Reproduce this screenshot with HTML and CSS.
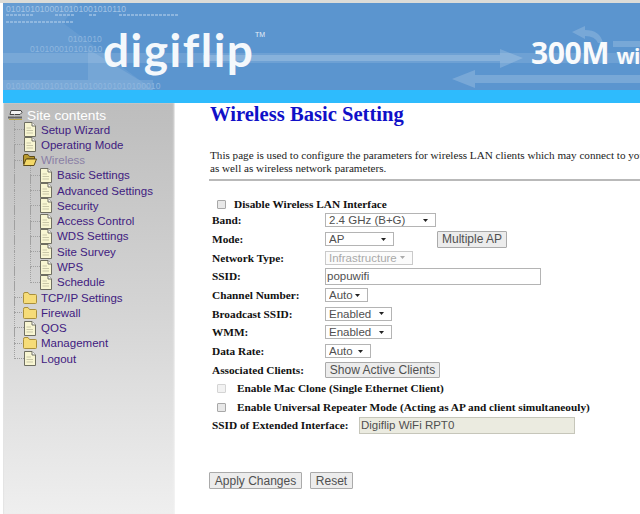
FILE: index.html
```html
<!DOCTYPE html>
<html lang="en">
<head>
<meta charset="utf-8">
<title>Wireless Basic Setting</title>
<link rel="stylesheet" href="styles.css">
</head>
<body>
<svg class="defs" width="0" height="0" aria-hidden="true">
  <defs>
    <symbol id="doc" viewBox="0 0 12 15">
      <path d="M.5 .5H8L11.500 4V14.500H.5Z" fill="#f8f6d2" stroke="#6f6f62"/>
      <path d="M8 .5V4H11.500" fill="#fff" stroke="#6f6f62"/>
      <path d="M2.500 6H7M2.500 8.500H9M2.500 11H9" stroke="#c9c7a8"/>
    </symbol>
    <symbol id="folder" viewBox="0 0 14 12">
      <path d="M.5 2.500V10.500Q.5 11.500 1.500 11.500H12.500Q13.500 11.500 13.500 10.500V3.500Q13.500 2.500 12.500 2.500H6.500L5 .5H2Q.5 .5 .5 2Z" fill="#f6dc78" stroke="#a98f3c"/>
    </symbol>
    <symbol id="open" viewBox="0 0 14 12">
      <path d="M.5 2Q.5 .5 2 .5H5L6.500 2.500H11.500V5H4L.5 10Z" fill="#b89a30" stroke="#5e4c18"/>
      <path d="M.5 11.500 3 5H13.500L11 11.500Z" fill="#f3d868" stroke="#5e4c18"/>
    </symbol>
  </defs>
</svg>
<header class="banner">
  <svg class="banner-art" viewBox="0 0 637 87" width="637" height="87" aria-hidden="true">
    <rect width="637" height="87" fill="#5b95cf"/>
    <path d="M0 0H75L60 20 150 87H0Z" fill="#fff" opacity=".07"/>
    <rect y="50" width="637" height="10" fill="#fff" opacity=".12"/>
    <path d="M85 46 136 77H85Z" fill="#fff" opacity=".1"/>
    <rect y="77" width="150" height="10" fill="#fff" opacity=".12"/>
    <path d="M200 52H497V46L520 55 497 65V58H200Z" fill="#fff" opacity=".18"/>
    <path d="M637 72H472V67L449 76 472 85V80H637Z" fill="#fff" opacity=".18"/>
    <path d="M610 38H637V44H610Z" fill="#fff" opacity=".18"/>
    <path d="M569 29 582 23V27Q597 27 600 40H595Q592 33 582 33V36Z" fill="#fff" opacity=".18"/>
    <path d="M3 12H30M52 12H72M86 12H94M116 12H175M3 19H70" stroke="#a3c4e6" stroke-width="2" stroke-dasharray="3 1" opacity=".7"/>
  </svg>
  <div class="banner-noise b1">0101010100010101001010110</div>
  <div class="banner-noise b4">0101010</div>
  <div class="banner-noise b2">010100010101010</div>
  <div class="banner-noise b3">01010001010101010100101010100010</div>
  <div class="logo">digiflip</div>
  <div class="tm">TM</div>
  <div class="tag">300M <span>wi</span></div>
</header>
<div class="stripe"></div>
<div class="page">
  <nav class="side">
    <div class="tree-root"><svg class="root-icon" viewBox="0 0 15 11"><path d="M3 .5H13L14 2.500 12 4.500H2Z" fill="#f2f2f2" stroke="#444"/><path d="M0 6.500H14V8.500H0Z" fill="#666"/><path d="M1 9.500H14" stroke="#b9a850"/></svg>Site contents</div>
    <ul class="tree">
      <li><svg class="ic"><use href="#doc"/></svg><a>Setup Wizard</a></li>
      <li><svg class="ic"><use href="#doc"/></svg><a>Operating Mode</a></li>
      <li><svg class="ic fold"><use href="#open"/></svg><a class="dim">Wireless</a></li>
      <li class="sub"><svg class="ic"><use href="#doc"/></svg><a>Basic Settings</a></li>
      <li class="sub"><svg class="ic"><use href="#doc"/></svg><a>Advanced Settings</a></li>
      <li class="sub"><svg class="ic"><use href="#doc"/></svg><a>Security</a></li>
      <li class="sub"><svg class="ic"><use href="#doc"/></svg><a>Access Control</a></li>
      <li class="sub"><svg class="ic"><use href="#doc"/></svg><a>WDS Settings</a></li>
      <li class="sub"><svg class="ic"><use href="#doc"/></svg><a>Site Survey</a></li>
      <li class="sub"><svg class="ic"><use href="#doc"/></svg><a>WPS</a></li>
      <li class="sub sub-last"><svg class="ic"><use href="#doc"/></svg><a>Schedule</a></li>
      <li><svg class="ic fold"><use href="#folder"/></svg><a>TCP/IP Settings</a></li>
      <li><svg class="ic fold"><use href="#folder"/></svg><a>Firewall</a></li>
      <li><svg class="ic"><use href="#doc"/></svg><a>QOS</a></li>
      <li><svg class="ic fold"><use href="#folder"/></svg><a>Management</a></li>
      <li class="last"><svg class="ic"><use href="#doc"/></svg><a>Logout</a></li>
    </ul>
  </nav>
  <main class="main">
    <h1>Wireless Basic Setting</h1>
    <p class="intro">This page is used to configure the parameters for wireless LAN clients which may connect to your Access Point.<br>as well as wireless network parameters.</p>
    <hr class="rule">
    <div class="check-row first"><input type="checkbox"><b>Disable Wireless LAN Interface</b></div>
    <div class="row"><label>Band:</label><select class="s-band"><option>2.4 GHz (B+G)</option></select></div>
    <div class="row"><label>Mode:</label><select class="s-mode"><option>AP</option></select><button class="b-multi">Multiple AP</button></div>
    <div class="row"><label>Network Type:</label><select class="s-type" disabled><option>Infrastructure</option></select></div>
    <div class="row"><label>SSID:</label><input class="t-ssid" type="text" value="popuwifi"></div>
    <div class="row"><label>Channel Number:</label><select class="s-chan"><option>Auto</option></select></div>
    <div class="row"><label>Broadcast SSID:</label><select class="s-en"><option>Enabled</option></select></div>
    <div class="row"><label>WMM:</label><select class="s-en"><option>Enabled</option></select></div>
    <div class="row"><label>Data Rate:</label><select class="s-rate"><option>Auto</option></select></div>
    <div class="row"><label>Associated Clients:</label><button class="b-clients">Show Active Clients</button></div>
    <div class="check-row clone"><input type="checkbox" disabled><b>Enable Mac Clone (Single Ethernet Client)</b></div>
    <div class="check-row rep"><input type="checkbox"><b>Enable Universal Repeater Mode (Acting as AP and client simultaneouly)</b></div>
    <div class="ext"><label>SSID of Extended Interface:</label><input class="t-ext" type="text" value="Digiflip WiFi RPT0" disabled></div>
    <div class="actions"><button class="b-apply">Apply Changes</button><button class="b-reset">Reset</button></div>
  </main>
</div>
</body>
</html>
```

FILE: styles.css
```css
html, body {
  margin: 0;
  padding: 0;
  width: 640px;
  height: 514px;
  overflow: hidden;
  background: #fff;
}
.defs { position: absolute; }
.banner {
  position: relative;
  height: 90px;
  box-sizing: border-box;
  border-top: 3px solid #dcdcd8;
  padding-left: 3px;
  overflow: hidden;
}
.banner-art { display: block; }
.banner-noise {
  position: absolute;
  font: 8.500px/10px "Liberation Sans", sans-serif;
  letter-spacing: .1px;
  color: #a3c4e6;
  white-space: nowrap;
}
.b1 { left: 6px; top: 1px; }
.b2 { left: 30px; top: 41px; color: #8fb7df; }
.b3 { left: 6px; top: 78px; color: #8fb7df; }
.b4 { left: 68px; top: 31px; color: #8fb7df; }
.logo {
  position: absolute;
  left: 103px;
  top: 22px;
  font: 700 46px/50px "Lato", sans-serif;
  letter-spacing: 1.500px;
  color: #f4f8fc;
  white-space: nowrap;
}
.tm {
  position: absolute;
  left: 255px;
  top: 28px;
  font: 7px/8px "Liberation Sans", sans-serif;
  color: #e4eef8;
}
.tag {
  position: absolute;
  left: 531px;
  top: 32px;
  font: bold 30px/36px "Open Sans", sans-serif;
  letter-spacing: -.4px;
  color: #f8fafc;
  white-space: nowrap;
}
.tag span { font-size: 21px; }
.stripe { height: 13px; margin-left: 3px; background: #2ebbfd; }
.page { display: flex; height: 411px; }
.side {
  width: 172px;
  margin-left: 3px;
  box-sizing: border-box;
  padding: 5px 0 0 5px;
  background: linear-gradient(#bdbdbd, #d4d4d4 50%, #efefef);
  box-shadow: inset -2px 0 2px -1px #f4f4f4, inset 1px 0 1px #e4e4e4;
  font: 11.500px "Liberation Sans", sans-serif;
}
.tree-root {
  display: flex;
  align-items: center;
  height: 15px;
  color: #fff;
  font-size: 13.700px;
}
.root-icon { width: 15px; height: 11px; margin-right: 4px; flex: none; }
.tree {
  list-style: none;
  margin: -1px 0 0;
  padding: 0 0 0 16px;
}
.tree li {
  position: relative;
  display: flex;
  align-items: center;
  height: 15.270px;
}
.tree li::before {
  content: "";
  position: absolute;
  left: -10px;
  top: -8px;
  bottom: 0;
  border-left: 1px dotted #a0a0a0;
}
.tree li::after {
  content: "";
  position: absolute;
  left: -10px;
  top: 7px;
  width: 10px;
  border-top: 1px dotted #a0a0a0;
}
.tree li.last::before { bottom: 7px; }
.tree li.sub { padding-left: 16px; }
.tree li.sub::after { left: 6px; }
.tree li.sub a::before {
  content: "";
  position: absolute;
  left: 6px;
  top: -8px;
  bottom: 0;
  border-left: 1px dotted #a0a0a0;
}
.tree li.sub-last a::before { bottom: 7px; }
.ic { width: 12px; height: 15px; margin-right: 5px; flex: none; position: relative; z-index: 1; }
.ic.fold { width: 14px; height: 12px; margin: 0 4px 0 -1px; }
.tree a { color: #3f2080; }
.tree a.dim { color: #8a7fa5; }
.main {
  flex: 1;
  min-width: 0;
  padding-left: 35px;
  font-family: "Liberation Serif", serif;
  font-size: 11.300px;
  color: #111;
  overflow: hidden;
}
h1 {
  margin: 0;
  font: bold 20.600px/22px "Liberation Serif", serif;
  color: #1010c8;
  white-space: nowrap;
}
.intro {
  margin: 24px 0 0;
  font-size: 11.150px;
  line-height: 12.500px;
  color: #222;
  white-space: nowrap;
}
.rule {
  margin: 5px 0 0 -1px;
  border: 0;
  height: 2px;
  background: #b9b9b9;
}
.check-row {
  display: flex;
  align-items: center;
  height: 14px;
  white-space: nowrap;
}
.check-row input {
  appearance: none;
  box-sizing: border-box;
  width: 9px;
  height: 9px;
  margin: 0 11px 0 7px;
  flex: none;
  border: 1px solid #a8a8a8;
  border-radius: 1px;
  background: #e8e8e8;
}
.check-row input:disabled { border-color: #d4d4d4; background: #f2f2f2; }
.first { margin-top: 16px; }
.first input { margin-right: 8px; }
.clone { margin-top: 2px; }
.rep { margin-top: 5px; }
.row {
  display: flex;
  align-items: center;
  height: 18.700px;
  white-space: nowrap;
}
.row label {
  width: 113px;
  padding-left: 2px;
  flex: none;
  font-weight: bold;
}
select, input[type="text"], button {
  font: 11.500px "Liberation Sans", sans-serif;
  color: #505050;
  box-sizing: border-box;
  margin: 0;
}
select {
  appearance: none;
  height: 14px;
  padding: 0 0 0 3px;
  line-height: 12px;
  border: 1px solid #b4b4b4;
  background: #fff url("data:image/svg+xml,%3Csvg xmlns='http://www.w3.org/2000/svg' width='5' height='3'%3E%3Cpath d='M0 0H5L2.500 3Z' fill='%23222'/%3E%3C/svg%3E") no-repeat right 7px center;
}
select:disabled {
  color: #858585;
  background: #fafafa url("data:image/svg+xml,%3Csvg xmlns='http://www.w3.org/2000/svg' width='5' height='3'%3E%3Cpath d='M0 0H5L2.500 3Z' fill='%23888'/%3E%3C/svg%3E") no-repeat right 7px center;
}
.s-band { width: 111px; }
.s-mode { width: 69px; }
.s-type { width: 88px; }
.s-chan { width: 43px; }
.s-rate { width: 46px; }
.s-en { width: 67px; }
.t-ssid {
  width: 216px;
  height: 17px;
  padding: 0 1px;
  border: 1px solid #b4b4b4;
}
button {
  height: 17px;
  padding: 0;
  font-size: 12px;
  background: #ececec;
  border: 1px solid #aaa;
  border-radius: 1px;
}
.b-multi { width: 70px; margin-left: 43px; }
.b-clients { width: 115px; height: 16px; }
.ext {
  display: flex;
  align-items: center;
  height: 19px;
  margin-top: 1.500px;
  padding-left: 2px;
  white-space: nowrap;
}
.ext label { font-weight: bold; width: 147px; flex: none; }
.t-ext {
  width: 216px;
  height: 17px;
  padding: 0 1px;
  border: 1px solid #c6c6ba;
  background: #ebebe0;
  color: #777;
}
.actions {
  display: flex;
  gap: 8px;
  margin: 37.500px 0 0 -1px;
}
.b-apply { width: 93px; }
.b-reset { width: 43px; }
```
